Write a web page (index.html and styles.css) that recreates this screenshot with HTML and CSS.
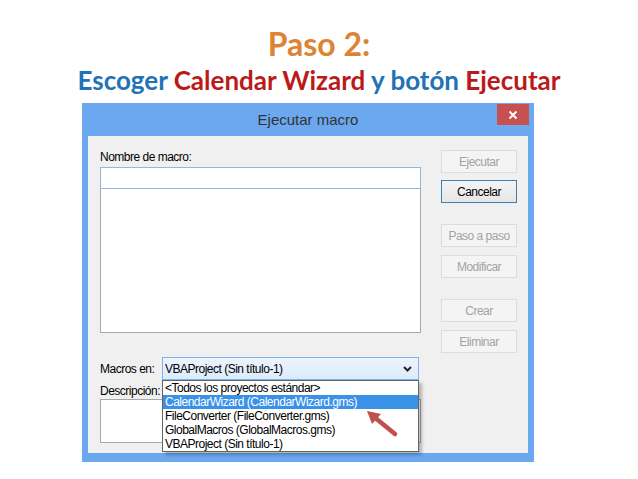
FILE: index.html
```html
<!DOCTYPE html>
<html lang="es">
<head>
    <meta charset="UTF-8">
    <title>Paso 2</title>
    <link rel="stylesheet" href="styles.css">
</head>
<body>
    <!-- Titulo de la diapositiva -->
    <header class="slide-head">
        <h1 class="step">Paso 2:</h1>
        <h2 class="task">
            <span class="blue">Escoger</span> <span class="red">Calendar Wizard</span>
            <span class="blue">y botón</span> <span class="red">Ejecutar</span>
        </h2>
    </header>

    <!-- Ventana Ejecutar macro -->
    <div class="window">
        <div class="titlebar">
            <span class="title">Ejecutar macro</span>
            <span class="close">
                <svg width="10" height="10" viewBox="0 0 10 10">
                    <path d="M1.5 1.5 L8.5 8.5 M8.5 1.5 L1.5 8.5" stroke="#fff" stroke-width="2"/>
                </svg>
            </span>
        </div>

        <div class="client">
            <div class="left">
                <div class="lbl name-lbl">Nombre de macro:</div>
                <div class="name-box"></div>
                <div class="macro-list"></div>

                <div class="combo-row">
                    <span class="lbl combo-lbl">Macros en:</span>
                    <div class="combo">
                        <span>VBAProject (Sin título-1)</span>
                        <svg class="chevron" width="9" height="6" viewBox="0 0 9 6">
                            <path d="M1 1 L4.5 4.5 L8 1" fill="none" stroke="#222" stroke-width="2"/>
                        </svg>

                        <!-- Lista desplegada -->
                        <ul class="dropdown">
                            <li>&lt;Todos los proyectos estándar&gt;</li>
                            <li class="selected">CalendarWizard (CalendarWizard.gms)</li>
                            <li>FileConverter (FileConverter.gms)</li>
                            <li>GlobalMacros (GlobalMacros.gms)</li>
                            <li>VBAProject (Sin título-1)</li>
                        </ul>
                        <svg class="pointer" width="36" height="30" viewBox="0 0 36 30">
                            <line x1="12" y1="10.5" x2="31" y2="26" stroke="#c0504d" stroke-width="4.5" stroke-linecap="round"/>
                            <polygon points="3,3 17,6 8,16" fill="#c0504d"/>
                        </svg>
                    </div>
                </div>

                <div class="lbl desc-lbl">Descripción:</div>
                <div class="desc-box"></div>
            </div>

            <div class="buttons">
                <div class="btn">Ejecutar</div>
                <div class="btn default">Cancelar</div>
                <div class="btn gap">Paso a paso</div>
                <div class="btn">Modificar</div>
                <div class="btn gap">Crear</div>
                <div class="btn">Eliminar</div>
            </div>
        </div>
    </div>
</body>
</html>
```

FILE: styles.css
```css
body {
    margin: 0;
    background: #fff;
    font-family: 'Liberation Sans', Arial, sans-serif;
}

/* Titulo */
.slide-head {
    height: 103px;
    box-sizing: border-box;
    padding-top: 29px;
    text-align: center;
    font-family: 'Lato', sans-serif;
    font-weight: bold;
}

.step {
    margin: 0;
    font-size: 32px;
    line-height: 30px;
    color: #dd8433;
}

.task {
    margin: 8px 0 0;
    font-size: 26px;
    line-height: 26px;
    font-weight: bold;
}

.blue { color: #2372b5; }
.red { color: #bb1a1a; }

/* Ventana */
.window {
    width: 452px;
    height: 359px;
    margin-left: 82px;
    background: #6ba8ef;
}

.titlebar {
    position: relative;
    height: 33px;
    display: flex;
    justify-content: center;
    align-items: center;
}

.title {
    font-size: 15px;
    color: #333;
}

.close {
    position: absolute;
    top: 1px;
    right: 5px;
    width: 32px;
    height: 21px;
    background: #c75050;
    display: flex;
    justify-content: center;
    align-items: center;
}

.client {
    height: 317px;
    margin: 0 6px;
    box-sizing: border-box;
    padding: 14px 11px 0 12px;
    background: #f0f0f0;
    display: flex;
    font-size: 12px;
    letter-spacing: -0.5px;
    color: #000;
}

.left {
    width: 321px;
}

.lbl {
    white-space: nowrap;
}

.name-lbl {
    height: 17px;
    line-height: 14px;
}

.name-box {
    height: 22px;
    box-sizing: border-box;
    border: 1px solid #8fb8e3;
    background: #fff;
}

.macro-list {
    height: 144px;
    box-sizing: border-box;
    border: 1px solid #a8a8a8;
    border-top: none;
    background: #fff;
}

.combo-row {
    display: flex;
    align-items: center;
    margin-top: 24px;
    height: 23px;
}

.combo-lbl {
    width: 62px;
}

.combo {
    position: relative;
    width: 257px;
    height: 23px;
    box-sizing: border-box;
    border: 1px solid #7eb4ea;
    background: linear-gradient(#ecf4fc, #dcecfc);
    display: flex;
    align-items: center;
    padding-left: 2px;
}

.chevron {
    margin-left: auto;
    margin-right: 6px;
}

.dropdown {
    position: absolute;
    top: 22px;
    left: -1px;
    width: 257px;
    box-sizing: border-box;
    margin: 0;
    padding: 0;
    list-style: none;
    background: #fff;
    border: 1px solid #646464;
    box-shadow: 3px 3px 3px rgba(0, 0, 0, 0.25);
    z-index: 2;
}

.dropdown li {
    height: 14px;
    line-height: 14px;
    padding-left: 2px;
    white-space: nowrap;
}

.dropdown .selected {
    background: #3991e8;
    color: #fff;
}

.pointer {
    position: absolute;
    left: 201px;
    top: 50px;
    z-index: 3;
}

.desc-lbl {
    margin-top: 3px;
    height: 16px;
    line-height: 16px;
}

.desc-box {
    height: 44px;
    box-sizing: border-box;
    border: 1px solid #a8a8a8;
    background: #fff;
}

/* Botones */
.buttons {
    margin-left: auto;
    width: 76px;
}

.btn {
    height: 23px;
    box-sizing: border-box;
    margin-top: 8px;
    border: 1px solid #dcdcdc;
    background: #f4f4f4;
    color: #a3a3a3;
    display: flex;
    justify-content: center;
    align-items: center;
}

.btn:first-child {
    margin-top: 0;
}

.btn.gap {
    margin-top: 21px;
}

.btn.default {
    margin-top: 7px;
    border-color: #3c7fb1;
    background: linear-gradient(#f4f4f4, #e6e6e6);
    color: #000;
}
```
